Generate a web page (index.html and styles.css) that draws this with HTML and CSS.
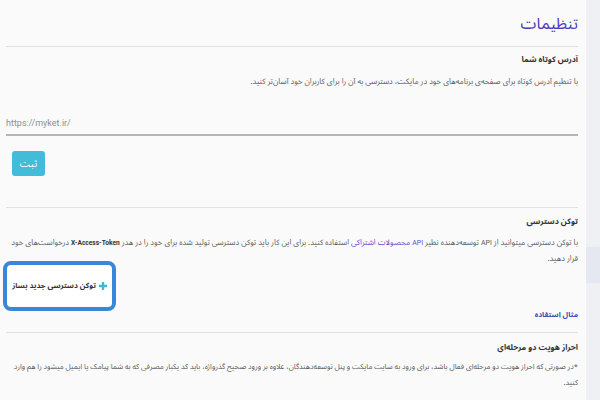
FILE: index.html
```html
<!DOCTYPE html>
<html lang="fa" dir="rtl">
<head>
<meta charset="utf-8">
<link rel="stylesheet" href="styles.css">
</head>
<body>
<div class="layout">
  <aside class="strip"><div class="strip-band"></div></aside>
  <main class="content">
    <h1 class="title">تنظیمات</h1>
    <hr class="divider">
    <section class="block">
      <h2 class="heading h-1">آدرس کوتاه شما</h2>
      <p class="text t-1">با تنظیم آدرس کوتاه برای صفحه‌ی برنامه‌های خود در مایکت، دسترسی به آن را برای کاربران خود آسان‌تر کنید.</p>
      <div class="field"><input class="input" type="text" placeholder="https://myket.ir/" dir="ltr"></div>
      <div class="actions"><button class="btn-submit">ثبت</button></div>
    </section>
    <hr class="divider divider-2">
    <section class="block">
      <h2 class="heading h-2">توکن دسترسی</h2>
      <p class="text t-2">با توکن دسترسی میتوانید از <span class="latin">API</span> توسعه‌دهنده نظیر <a class="link"><span class="latin">API</span> محصولات اشتراکی</a> استفاده کنید. برای این کار باید توکن دسترسی تولید شده برای خود را در هدر <b class="code">X-Access-Token</b> درخواست‌های خود قرار&nbsp;دهید.</p>
      <div class="token-row">
        <button class="btn-token"><span class="plus"><svg width="8" height="8" viewBox="0 0 8 8"><path d="M4 0v8M0 4h8" stroke="#3cb9d3" stroke-width="2.4"/></svg></span><span>توکن دسترسی جدید بساز</span></button>
      </div>
      <a class="example">مثال استفاده</a>
    </section>
    <hr class="divider divider-3">
    <section class="block">
      <h2 class="heading h-3">احراز هویت دو مرحله‌ای</h2>
      <p class="text t-3">*در صورتی که احراز هویت دو مرحله‌ای فعال باشد، برای ورود به سایت مایکت و پنل توسعه‌دهندگان، علاوه بر ورود صحیح گذرواژه، باید کد یکبار مصرفی که به شما پیامک یا ایمیل میشود را هم وارد کنید.</p>
    </section>
  </main>
</div>
</body>
</html>
```

FILE: styles.css
```css
html, body {
  margin: 0;
  padding: 0;
  background: #fafafa;
  font-family: "Noto Sans Arabic", "DejaVu Sans", sans-serif;
  color: #333;
}
.layout {
  display: flex;
  flex-direction: row;
  height: 400px;
  overflow: hidden;
}
.strip {
  width: 14px;
  flex: none;
  background: #eef0f4;
  padding-top: 247px;
  box-sizing: border-box;
}
.strip-band {
  height: 36px;
  background: #e5e8f0;
}
.content {
  flex: 1;
  padding: 0 8px 0 6px;
  box-sizing: border-box;
}
.title {
  margin: 0;
  height: 46px;
  font-size: 16px;
  font-weight: normal;
  color: #4b3bbd;
  line-height: 48px;
}
.divider {
  margin: 0;
  border: 0;
  border-top: 1px solid #e2e2e2;
}
.block { margin: 0; }
.heading {
  margin: 0;
  height: 16px;
  font-size: 8px;
  font-weight: bold;
  color: #333;
  line-height: 16px;
}
.h-1 { margin-top: 5px; }
.h-2 { margin-top: 6px; }
.h-3 { margin-top: 7px; }
.text {
  margin: 0;
  font-size: 7.8px;
  color: #5a5a5a;
  line-height: 16px;
}
.t-1 { margin-top: 6px; height: 16px; }
.t-2 { margin-top: 5px; height: 32px; font-size: 7.8px; }
.t-3 { margin-top: 3px; height: 32px; font-size: 7.5px; word-spacing: -0.1px; }
.latin {
  font-family: "Roboto", "Liberation Sans", sans-serif;
  font-size: 7px;
}
.field {
  margin-top: 22px;
}
.input {
  display: block;
  width: 100%;
  height: 24px;
  box-sizing: border-box;
  border: 0;
  border-bottom: 2px solid #b5b5b5;
  background: transparent;
  font-family: "Roboto", "Liberation Sans", sans-serif;
  font-size: 9px;
  padding: 0;
  outline: none;
  text-align: left;
}
.input::placeholder { color: #8f8f8f; }
.actions {
  margin-top: 15px;
  padding-left: 6px;
  display: flex;
  justify-content: flex-end;
}
.btn-submit {
  width: 33px;
  height: 25px;
  border: 0;
  border-radius: 3px;
  background: #42bcd8;
  color: #fff;
  font-family: inherit;
  font-size: 10px;
  padding: 0;
}
.divider-2 { margin-top: 31px; }
.link { color: #6a4ac9; }
.code {
  color: #333;
  font-weight: bold;
  font-family: "Roboto", "Liberation Sans", sans-serif;
  font-size: 6.6px;
}
.token-row {
  display: flex;
  justify-content: flex-end;
  margin-top: -2px;
  padding-left: 1px;
}
.btn-token {
  width: 105px;
  height: 42px;
  box-sizing: border-box;
  border: 0;
  outline: 4px solid #3a86d8;
  border-radius: 4px;
  background: #fff;
  display: flex;
  align-items: center;
  justify-content: center;
  gap: 3px;
  font-family: inherit;
  font-size: 7.5px;
  font-weight: bold;
  color: #333;
  padding: 0;
  white-space: nowrap;
}
.plus { display: flex; }
.example {
  display: block;
  height: 16px;
  font-size: 7.5px;
  font-weight: bold;
  color: #3c4db5;
  line-height: 16px;
}
.divider-3 { margin-top: 9px; }
```
